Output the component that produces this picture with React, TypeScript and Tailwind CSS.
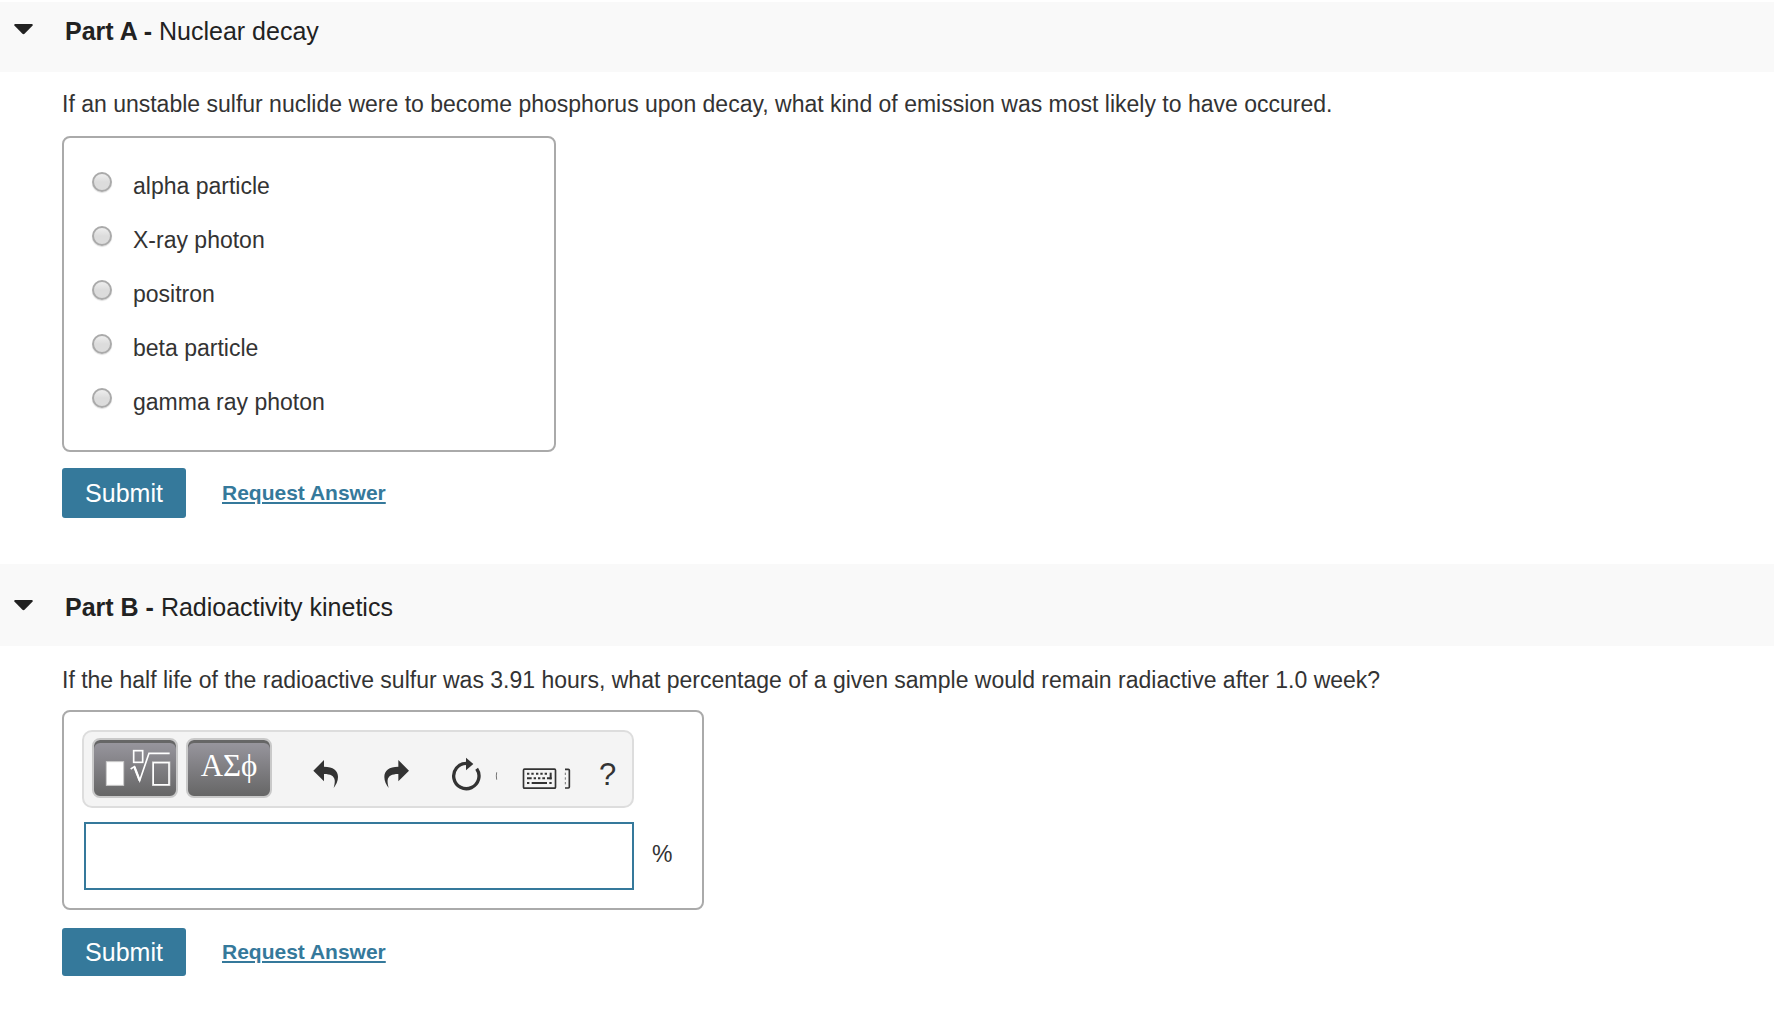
import { useState } from "react";

/* ------------------------------------------------------------------ */
/*  Icons                                                              */
/* ------------------------------------------------------------------ */

function CaretIcon() {
  return (
    <svg viewBox="0 0 19 11" className="h-[11px] w-[19px]" fill="#222" aria-hidden="true">
      <path d="M1 0h17q1.500.6.4 1.800l-7.600 7.700q-1.300 1.300-2.600 0L.6 1.800Q-.5.600 1 0z" />
    </svg>
  );
}

function TemplatesIcon() {
  return (
    <svg viewBox="135 147 198 114" className="h-[38px] w-[66px]" fill="none" aria-hidden="true">
      <rect x="139" y="185" width="52" height="71" fill="#fff" stroke="#ccc" strokeWidth="3" />
      <rect x="221" y="152" width="27" height="35" stroke="#fff" strokeWidth="5" />
      <path d="M212 207l11-7 16 42 28-82h62" stroke="#fff" strokeWidth="5" />
      <path d="M223 200l16 42" stroke="#fff" strokeWidth="7" />
      <rect x="279" y="187" width="49" height="68" stroke="#ccc" strokeWidth="6" />
      <rect x="280" y="188" width="47" height="66" stroke="#fff" strokeWidth="4" />
    </svg>
  );
}

function UndoIcon() {
  return (
    <svg viewBox="39 51 78 96" className="h-8 w-[26px]" fill="#333" aria-hidden="true">
      <path d="M40 92l32-32v20c28 0 42 12 42 31 0 13-6 24-13 33 2-9 4-16 3-24-2-12-12-18-32-18v22z" />
    </svg>
  );
}

function RedoIcon() {
  return (
    <svg viewBox="252 51 78 96" className="h-8 w-[26px]" fill="#333" aria-hidden="true">
      <path d="M327 92l-32-32v20c-28 0-42 12-42 31 0 13 6 24 13 33-2-9-4-16-3-24 2-12 12-18 32-18v22z" />
    </svg>
  );
}

function ResetIcon() {
  return (
    <svg viewBox="453 51 141 96" className="h-8 w-[47px] overflow-visible" fill="none" aria-hidden="true">
      <path d="M499 70a38 38 0 1 0 31 16" stroke="#333" strokeWidth="10" />
      <path d="M498 53l22 19-22 19z" fill="#333" />
      <path d="M590 97q-2 10 0 22" stroke="#333" strokeWidth="2" />
    </svg>
  );
}

function KeyboardIcon() {
  return (
    <svg viewBox="123 51 147 96" className="h-8 w-[49px]" fill="none" stroke="#333" aria-hidden="true">
      <rect x="127.500" y="87.500" width="96" height="57" rx="3" strokeWidth="5" />
      <path
        d="M138 101h7m6 0h7m7 0h7m6 0h7m6 0h7M138 115h14m6 0h7m6 0h7m6 0h8m6 0h14M138 129h7m7 0h46m7 0h7"
        strokeWidth="6"
      />
      <path d="M209 98v20" strokeWidth="6" />
      <path d="M252 88h10q3 0 3 3v50q0 3-3 3h-10" strokeWidth="5" />
      <path d="M253 98v7m0 7v7m0 7v7" strokeWidth="2" />
    </svg>
  );
}

/* ------------------------------------------------------------------ */
/*  Shared pieces                                                      */
/* ------------------------------------------------------------------ */

function PartHeader({
  part,
  title,
  open,
  onToggle,
  className,
}: {
  part: string;
  title: string;
  open: boolean;
  onToggle: () => void;
  className: string;
}) {
  return (
    <header className={`flex items-center gap-8 bg-[#f9f9f9] pl-3.5 text-[#222] ${className}`}>
      <button type="button" aria-expanded={open} aria-label={`Toggle ${part}`} onClick={onToggle} className="mb-1">
        <CaretIcon />
      </button>
      <h2 className="text-[25px] leading-[30px]">
        <span className="font-bold">{part} -</span> {title}
      </h2>
    </header>
  );
}

function Actions({ className, buttonHeight }: { className: string; buttonHeight: string }) {
  return (
    <div className={`flex items-center gap-9 ${className}`}>
      <button type="submit" className={`w-[124px] rounded-[3px] bg-[#35799b] text-[25px] text-white ${buttonHeight}`}>
        Submit
      </button>
      <a href="#request" className="text-[21px] leading-6 font-bold text-[#35799b] underline decoration-2 underline-offset-2">
        Request Answer
      </a>
    </div>
  );
}

const paletteButton =
  "flex h-[60px] w-[86px] items-center justify-center rounded-lg border-2 border-[#c9c9c9] bg-linear-to-b from-[#9a98a0] to-[#666] text-white shadow-[inset_0_3px_0_#666]";

/* ------------------------------------------------------------------ */
/*  Page                                                               */
/* ------------------------------------------------------------------ */

const choices = ["alpha particle", "X-ray photon", "positron", "beta particle", "gamma ray photon"];

export default function App() {
  const [openA, setOpenA] = useState(true);
  const [openB, setOpenB] = useState(true);
  const [choice, setChoice] = useState("");
  const [percent, setPercent] = useState("");

  return (
    <main className="min-h-screen bg-white pt-0.5 font-['Liberation_Sans',Arial,sans-serif] text-[23px] leading-8 text-[#333]">
      {/* Part A */}
      <section>
        <PartHeader
          part="Part A"
          title="Nuclear decay"
          open={openA}
          onToggle={() => setOpenA(!openA)}
          className="pt-3.5 pb-[26px]"
        />
        {openA && (
          <form className="px-[62px] pt-4" onSubmit={(e) => e.preventDefault()}>
            <p>
              If an unstable sulfur nuclide were to become phosphorus upon decay, what kind of emission was most likely
              to have occured.
            </p>
            <div
              role="radiogroup"
              aria-label="Kind of emission"
              className="mt-4 max-w-[494px] rounded-lg border-2 border-[#aaa] px-7 py-[21px]"
            >
              {choices.map((label) => (
                <label key={label} className="flex h-[54px] items-center gap-[21px]">
                  <input
                    type="radio"
                    name="emission"
                    value={label}
                    checked={choice === label}
                    onChange={() => setChoice(label)}
                    className="mb-2 size-5 appearance-none rounded-full border-2 border-[#aaa] bg-linear-to-b from-[#eee] to-[#dcdcdc] to-50% shadow-[0_1px_1px_#ddd] checked:border-[6px] checked:border-[#35799b]"
                  />
                  {label}
                </label>
              ))}
            </div>
            <Actions className="mt-4" buttonHeight="h-[50px]" />
          </form>
        )}
      </section>

      {/* Part B */}
      <section className="mt-[46px]">
        <PartHeader
          part="Part B"
          title="Radioactivity kinetics"
          open={openB}
          onToggle={() => setOpenB(!openB)}
          className="pt-7 pb-6"
        />
        {openB && (
          <form className="px-[62px] pt-[18px]" onSubmit={(e) => e.preventDefault()}>
            <label htmlFor="percent" className="block">
              If the half life of the radioactive sulfur was 3.91 hours, what percentage of a given sample would remain
              radiactive after 1.0 week?
            </label>
            <div className="mt-3.5 max-w-[642px] rounded-lg border-2 border-[#aaa] p-[18px]">
              <div
                role="toolbar"
                aria-label="Equation tools"
                className="flex max-w-[552px] items-center rounded-[10px] border-2 border-[#ddd] bg-[#f4f4f4] px-2 pt-1.5 pb-2"
              >
                <div className="flex gap-2">
                  <button type="button" aria-label="Templates" className={`pl-1.5 ${paletteButton}`}>
                    <TemplatesIcon />
                  </button>
                  <button
                    type="button"
                    aria-label="Symbols"
                    className={`pb-1 font-['Liberation_Serif',serif] text-[31px] ${paletteButton}`}
                  >
                    ΑΣϕ
                  </button>
                </div>
                <div className="mt-2.5 ml-[41px] flex items-center">
                  <button type="button" aria-label="Undo">
                    <UndoIcon />
                  </button>
                  <button type="button" aria-label="Redo" className="ml-[45px]">
                    <RedoIcon />
                  </button>
                  <button type="button" aria-label="Reset" className="ml-[41px]">
                    <ResetIcon />
                  </button>
                  <button type="button" aria-label="Keyboard shortcuts" className="ml-6">
                    <KeyboardIcon />
                  </button>
                  <button type="button" aria-label="Help" className="mt-1 ml-7 text-[31px]">
                    ?
                  </button>
                </div>
              </div>
              <div className="mt-3.5 flex items-center gap-[18px]">
                <input
                  id="percent"
                  type="text"
                  value={percent}
                  onChange={(e) => setPercent(e.target.value)}
                  className="ml-0.5 h-[68px] w-full max-w-[550px] border-2 border-[#35799b] bg-white px-3 outline-none"
                />
                <span className="mb-1">%</span>
              </div>
            </div>
            <Actions className="mt-[18px]" buttonHeight="h-12" />
          </form>
        )}
      </section>
    </main>
  );
}
